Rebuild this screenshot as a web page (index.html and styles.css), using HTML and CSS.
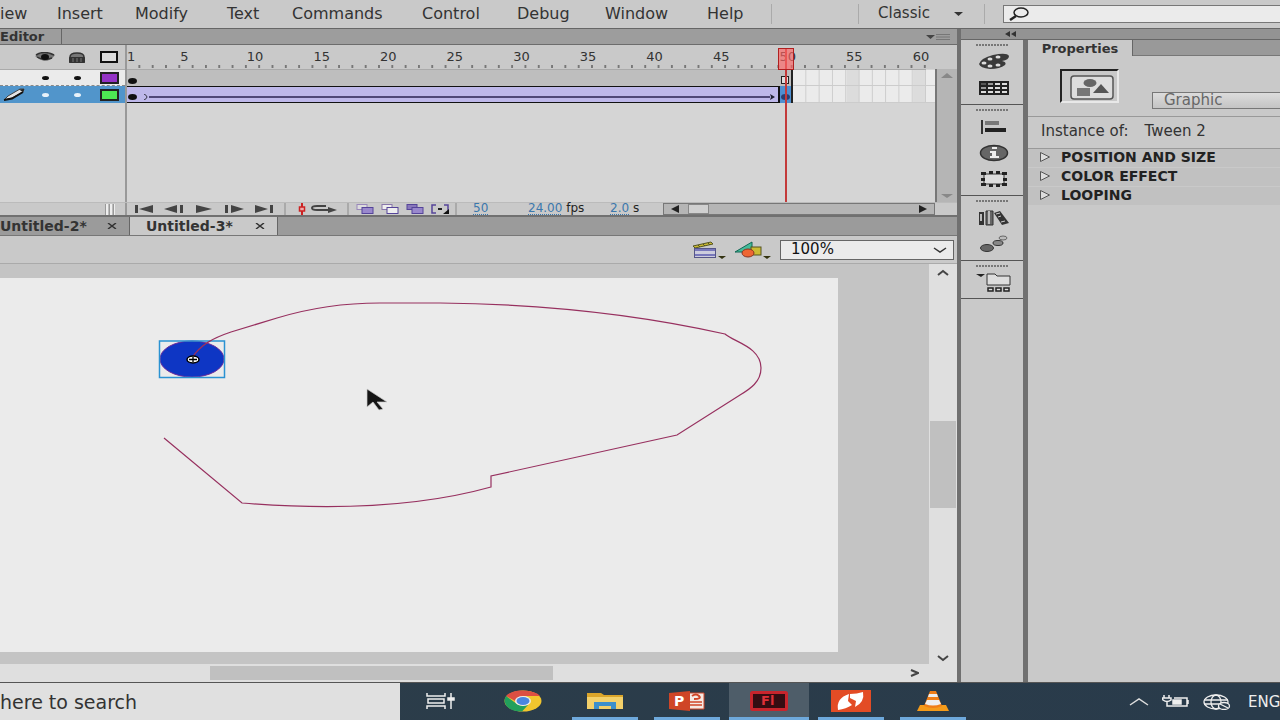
FILE: index.html
```html
<!DOCTYPE html>
<html lang="en">
<head>
<meta charset="utf-8">
<title>Untitled-3*</title>
<link rel="stylesheet" href="styles.css">
</head>
<body>
<header class="menubar">
  <nav class="menus">
    <button>iew</button><button>Insert</button><button>Modify</button><button>Text</button><button>Commands</button><button>Control</button><button>Debug</button><button>Window</button><button>Help</button>
  </nav>
  <div class="workspace">
    <select class="workspace-select" aria-label="Workspace"><option>Classic</option></select>
    <svg width="9" height="5" viewBox="0 0 9 5"><path d="M0 0h9L4.500 4z" fill="#333"/></svg>
  </div>
  <label class="help-search">
    <svg width="22" height="14" viewBox="0 0 22 14" fill="none" stroke="#222"><ellipse cx="13" cy="5.500" rx="7" ry="4.500" stroke-width="1.500"/><path d="M8 9L2 13" stroke-width="2.500"/></svg>
    <input type="text" aria-label="Search help">
  </label>
</header>

<main class="workarea">
  <section class="editor">
    <div class="panel-tabs">
      <button class="panel-tab">Editor</button>
      <button class="panel-menu" aria-label="Panel menu"><svg width="24" height="8" viewBox="0 0 24 8"><path d="M0 2h9L4.500 6z" fill="#444"/><path d="M10 1.500h14M10 4h14M10 6.500h14" stroke="#777"/></svg></button>
    </div>

    <div class="timeline">
      <div class="layers">
        <div class="layer layer-head">
          <span></span>
          <svg width="20" height="10" viewBox="0 0 20 10"><path d="M0 4Q9-2 20 3Q16 9 9 9Q4 8 0 4" fill="#777"/><path d="M1 3Q9-2 19 3M2 5Q8 9 17 6" fill="none" stroke="#333" stroke-width="1.500"/><ellipse cx="10" cy="5" rx="4" ry="3" fill="#111"/></svg>
          <svg width="16" height="11" viewBox="0 0 16 11"><path d="M1 5Q1 1 8 1T15 5V10H1z" fill="#777" stroke="#333" stroke-width="1.500"/><rect y="5" width="16" height="6" rx="1" fill="#333"/><path d="M3 7h10M3 9h10" stroke="#777" stroke-dasharray="2 2"/></svg>
          <svg width="18" height="12" viewBox="0 0 18 12"><rect x="1" y="1" width="16" height="10" fill="#ddd" stroke="#111" stroke-width="2"/></svg>
        </div>
        <div class="layer layer-guide">
          <span></span><i class="dot"></i><i class="dot"></i><i class="swatch purple"></i>
        </div>
        <div class="layer layer-active">
          <svg class="pencil" width="24" height="14" viewBox="0 0 24 14"><path d="M1 12L5 8L17 1H21L20 4L9 10z" fill="#e4e4e4" stroke="#444"/><path d="M1 12L9 10.500L20 4" fill="none" stroke="#111" stroke-width="2"/><path d="M16 1.500L21 1L20 4z" fill="#222"/></svg>
          <i class="dot"></i><i class="dot"></i><i class="swatch green"></i>
        </div>
      </div>
      <div class="frames">
        <div class="frame-area">
          <div class="ruler">
            <span class="first">1</span><span>5</span><span>10</span><span>15</span><span>20</span><span>25</span><span>30</span><span>35</span><span>40</span><span>45</span><span>50</span><span>55</span><span class="last">60</span>
          </div>
          <div class="track track-guide">
            <div class="span-static"><i class="key"></i><i class="span-end"></i></div><div class="empty"></div>
          </div>
          <div class="track">
            <div class="span-tween"><i class="key"></i>
              <svg class="tween-start" width="6" height="6" viewBox="0 0 6 6"><path d="M1 0Q7 3 1 6" fill="none" stroke="#334"/></svg>
              <i class="tween-line"></i>
              <svg class="tween-end" width="5" height="6" viewBox="0 0 5 6"><path d="M0 0L5 3L0 6L1 3z" fill="#223"/></svg>
            </div>
            <div class="frame-selected"><i class="key"></i></div><div class="empty"></div>
          </div>
          <div class="playhead"></div>
        </div>
      </div>
      <div class="tl-scroll">
        <svg width="12" height="6" viewBox="0 0 12 6"><path d="M0 5h12L6 0z" fill="#888"/></svg>
        <svg width="12" height="6" viewBox="0 0 12 6"><path d="M0 1h12L6 5z" fill="#888"/></svg>
      </div>
    </div>

    <div class="tl-footer">
      <div class="footer-left"><i class="grip"></i></div>
      <div class="transport">
        <button aria-label="First frame"><svg width="20" height="10" viewBox="0 0 20 10" fill="#444"><path d="M1 1h3v8H1zM19 1v8L5 5z"/></svg></button>
        <button aria-label="Step back"><svg width="20" height="10" viewBox="0 0 20 10" fill="#444"><path d="M13 1v8L0 5zM16 1h3v8h-3z"/></svg></button>
        <button aria-label="Play"><svg width="18" height="10" viewBox="0 0 18 10"><path d="M1 1v8L17 5z" fill="#444"/></svg></button>
        <button aria-label="Step forward"><svg width="20" height="10" viewBox="0 0 20 10" fill="#444"><path d="M1 1h3v8H1zM7 1v8L20 5z"/></svg></button>
        <button aria-label="Last frame"><svg width="20" height="10" viewBox="0 0 20 10" fill="#444"><path d="M1 1v8L14 5zM16 1h3v8h-3z"/></svg></button>
      </div>
      <i class="sep"></i>
      <div class="marks">
        <button aria-label="Center frame"><svg width="8" height="12" viewBox="0 0 8 12"><path d="M4 0v12" stroke="#c22" stroke-width="2"/><rect x="1.500" y="4" width="5" height="4" fill="#eaa" stroke="#c22" stroke-width="1.500"/></svg></button>
        <button aria-label="Loop"><svg width="28" height="10" viewBox="0 0 28 10"><path d="M16 2H7Q2 2 2 4T7 6H20" fill="none" stroke="#444" stroke-width="2"/><path d="M18 3L27 6L18 9z" fill="#444"/></svg></button>
      </div>
      <i class="sep"></i>
      <div class="onions">
        <button aria-label="Onion skin"><svg width="18" height="10" viewBox="0 0 18 10"><rect x="1" y=".5" width="10" height="5" fill="#ddd" stroke="#98b"/><rect x="6" y="3.500" width="11" height="6" fill="#98c" stroke="#549"/></svg></button>
        <button aria-label="Onion skin outlines"><svg width="18" height="10" viewBox="0 0 18 10"><rect x="1" y=".5" width="10" height="5" fill="#eee" stroke="#87a"/><rect x="6" y="3.500" width="11" height="6" fill="#eee" stroke="#549"/></svg></button>
        <button aria-label="Edit multiple frames"><svg width="18" height="10" viewBox="0 0 18 10"><rect x="1" y=".5" width="10" height="5" fill="#87b" stroke="#549"/><rect x="6" y="3.500" width="11" height="6" fill="#98c" stroke="#549"/></svg></button>
        <button aria-label="Onion markers"><svg width="18" height="10" viewBox="0 0 18 10"><path d="M5 1H1v8h4M13 1h4v7" fill="none" stroke="#549" stroke-width="1.500"/><path d="M7 5h4" stroke="#222" stroke-width="2"/><path d="M18 5v5h-6z" fill="#111"/></svg></button>
      </div>
      <i class="sep"></i>
      <div class="readout"><a href="#">50</a><span><a href="#">24.00</a> fps</span><span><a href="#">2.0</a> s</span></div>
      <div class="tl-hscroll">
        <button aria-label="Scroll left"><svg width="8" height="8" viewBox="0 0 8 8"><path d="M8 0v8L0 4z" fill="#222"/></svg></button>
        <i class="tl-thumb"></i>
        <button class="to-right" aria-label="Scroll right"><svg width="8" height="8" viewBox="0 0 8 8"><path d="M0 0v8L8 4z" fill="#222"/></svg></button>
      </div>
    </div>

    <div class="doc-tabs">
      <button class="doc-tab doc-prev"><span>Untitled-2*</span><svg width="10" height="6" viewBox="0 0 10 6"><path d="M1 0L9 6M9 0L1 6" stroke="#333" stroke-width="1.500"/></svg></button>
      <button class="doc-tab doc-current"><span>Untitled-3*</span><svg width="10" height="6" viewBox="0 0 10 6"><path d="M1 0L9 6M9 0L1 6" stroke="#333" stroke-width="1.500"/></svg></button>
    </div>

    <div class="editbar">
      <button aria-label="Edit scene"><svg width="34" height="18" viewBox="0 0 34 18"><path d="M1 5L19 1L21 3L3 7z" fill="#cb3" stroke="#552"/><path d="M6 4l2 2M11 3l2 2M16 2l2 2" stroke="#552"/><rect x="2.500" y="7.500" width="21" height="9" fill="#ccd" stroke="#558"/><path d="M3 9h20M3 14h20" stroke="#77b" stroke-width="2"/><path d="M26 15h8l-4 3z" fill="#331"/></svg></button>
      <button aria-label="Edit symbols"><svg width="38" height="18" viewBox="0 0 38 18"><path d="M1 11L18 1V11z" fill="#4b9" stroke="#165"/><rect x="17" y="6" width="10" height="8" fill="#cb3" stroke="#552"/><ellipse cx="14" cy="12" rx="6" ry="4" fill="#e63" stroke="#832"/><path d="M29 15h8l-4 3z" fill="#331"/></svg></button>
      <div class="zoom-box">
        <select aria-label="Zoom"><option>100%</option></select>
        <svg width="14" height="6" viewBox="0 0 14 6"><path d="M1 1L7 5L13 1" fill="none" stroke="#333" stroke-width="1.500"/></svg>
      </div>
    </div>

    <div class="stage">
      <div class="pasteboard">
        <svg class="paper" viewBox="0 278 838 374" preserveAspectRatio="xMinYMin meet">
          <ellipse cx="192" cy="359" rx="32" ry="18" fill="#0e36c4" stroke="#6c2a9a"/>
          <rect x="159.500" y="341" width="65" height="36.500" fill="none" stroke="#2a92d2" stroke-width="1.500"/>
          <path d="M192 358C200 345 213 338 231 332L277 318C310 308 340 303 380 303L440 303C540 304 640 315 725 334C734 342 761 347 761 368C761 382 750 389 740 395L677 435L491 476V487Q391 515 242 503L164 438" fill="none" stroke="#97305f" stroke-width="1.200"/>
          <ellipse cx="193" cy="359.500" rx="6" ry="3.500" fill="#fff" stroke="#000" stroke-width="1.500"/>
          <path d="M189 359.500h8M193 357v5" stroke="#000" stroke-width="1.300"/>
          <path d="M367 389V407L373 402L379 410L383 409L377 402H387z" fill="#151515" stroke="#ccc" stroke-width=".7"/>
        </svg>
      </div>
      <div class="vscroll">
        <svg width="12" height="7" viewBox="0 0 12 7"><path d="M1 6L6 2L11 6" fill="none" stroke="#444" stroke-width="2"/></svg>
        <i class="vthumb"></i>
        <svg width="12" height="7" viewBox="0 0 12 7"><path d="M1 1L6 5L11 1" fill="none" stroke="#444" stroke-width="2"/></svg>
      </div>
      <div class="hscroll">
        <i class="hthumb"></i>
        <svg width="9" height="8" viewBox="0 0 9 8"><path d="M1 1L8 4L1 7" fill="none" stroke="#444" stroke-width="2"/></svg>
      </div>
    </div>
  </section>

  <aside class="side">
    <div class="side-bar"><svg width="12" height="6" viewBox="0 0 12 6"><path d="M5 0v6L0 3zM11 0v6L6 3z" fill="#333"/></svg></div>
    <div class="side-body">
      <div class="dock">
        <div class="dock-group g-two">
          <button aria-label="Color"><svg width="32" height="18" viewBox="0 0 32 18"><path d="M1 11Q3 5 15 2Q29 -1 31 3Q31 7 24 8Q29 9 27 12Q22 16 12 16Q2 15 1 11" fill="#3a3a3a"/><g fill="#ddd"><ellipse cx="6" cy="10" rx="2.500" ry="1.500"/><ellipse cx="12" cy="6" rx="2.500" ry="1.500"/><ellipse cx="20" cy="4" rx="2.500" ry="1.500"/><ellipse cx="12" cy="13" rx="2.500" ry="1.500"/><ellipse cx="20" cy="12" rx="2.500" ry="1.500"/></g></svg></button>
          <button aria-label="Swatches"><svg width="30" height="14" viewBox="0 0 30 14"><rect width="30" height="14" fill="#222"/><path d="M2 2h5v2H2z" fill="#555"/><path d="M9 2h5v2H9zM2 6h5v2H2z" fill="#999"/><path d="M16 2h5v2h-5zM23 2h5v2h-5zM9 6h5v2H9zM16 6h5v2h-5zM23 6h5v2h-5zM2 10h5v2H2zM9 10h5v2H9zM16 10h5v2h-5zM23 10h5v2h-5z" fill="#ddd"/></svg></button>
        </div>
        <div class="dock-group g-three">
          <button aria-label="Align"><svg width="26" height="14" viewBox="0 0 26 14"><path d="M0 0h2v14H0z" fill="#333"/><path d="M4 1h14v4H4z" fill="#777"/><path d="M4 8h21v4H4z" fill="#222"/></svg></button>
          <button aria-label="Info"><svg width="30" height="18" viewBox="0 0 30 18"><ellipse cx="15" cy="9" rx="13.500" ry="7.500" fill="#666" stroke="#333" stroke-width="1.500"/><path d="M13 3h5v2h-5zM11 7h6v5h3v2h-9v-2h2V9h-2z" fill="#eee"/></svg></button>
          <button aria-label="Transform"><svg width="28" height="16" viewBox="0 0 28 16"><rect x="4" y="3" width="20" height="10" fill="#ddd" stroke="#333"/><path d="M1 1h5v3H1zM9 0h4v3H9zM16 0h4v3h-4zM22 1h5v3h-5zM1 7h4v3H1zM23 7h4v3h-4zM1 12h5v3H1zM9 13h4v3H9zM16 13h4v3h-4zM22 12h5v3h-5z" fill="#222"/></svg></button>
        </div>
        <div class="dock-group g-two-small">
          <button aria-label="Library"><svg width="32" height="16" viewBox="0 0 32 16"><path d="M1 2h5v13H1z" fill="#333"/><path d="M8 1h7v14H8z" fill="#666" stroke="#333"/><path d="M2 4h2v7H2zM10 1h2v13h-2z" fill="#bbb"/><path d="M16 3L22 1L31 13L24 15z" fill="#333"/><path d="M18 4l4-1M20 7l3-1M23 12l4-1" stroke="#ccc"/></svg></button>
          <button aria-label="Motion presets"><svg width="30" height="18" viewBox="0 0 30 18" stroke="#333"><ellipse cx="8" cy="13" rx="6.500" ry="3.500" fill="#666"/><ellipse cx="19" cy="8" rx="5" ry="2.500" fill="#888"/><ellipse cx="24" cy="3" rx="4" ry="2" fill="#bbb" stroke="#666"/></svg></button>
        </div>
        <div class="dock-group g-one">
          <button aria-label="Project"><svg width="36" height="20" viewBox="0 0 36 20"><path d="M0 1h9L5 4z" fill="#222"/><path d="M11 12V1h8l2 2h13v9z" fill="#ddd" stroke="#333"/><path d="M12 15h5v3h-5zM20 15h5v3h-5zM28 15h5v3h-5z" fill="#ddd" stroke="#222" stroke-width="1.500"/></svg></button>
        </div>
      </div>
      <section class="props">
        <div class="props-tabs"><button>Properties</button></div>
        <div class="props-head">
          <div class="symbol-icon"><svg width="46" height="28" viewBox="0 0 46 28"><rect x="2" y="2" width="42" height="23" rx="3" fill="#ddd" stroke="#555" stroke-width="1.500"/><ellipse cx="21" cy="9" rx="6.500" ry="4" fill="#666"/><path d="M8 14h13v8H8z" fill="#777"/><path d="M32 10l8 9H24z" fill="#555"/></svg></div>
          <select aria-label="Instance behavior"><option>Graphic</option></select>
        </div>
        <div class="instance"><span>Instance of:</span><span>Tween 2</span></div>
        <div class="accordion">
          <button><svg width="10" height="10" viewBox="0 0 10 10"><path d="M.5 .5v9L9.500 5z" fill="#ddd" stroke="#555"/></svg>POSITION AND SIZE</button>
          <button><svg width="10" height="10" viewBox="0 0 10 10"><path d="M.5 .5v9L9.500 5z" fill="#ddd" stroke="#555"/></svg>COLOR EFFECT</button>
          <button><svg width="10" height="10" viewBox="0 0 10 10"><path d="M.5 .5v9L9.500 5z" fill="#ddd" stroke="#555"/></svg>LOOPING</button>
        </div>
      </section>
    </div>
  </aside>
</main>

<footer class="taskbar">
  <input class="task-search" type="text" placeholder="here to search" aria-label="Search">
  <div class="apps">
    <button aria-label="Task view"><svg width="30" height="16" viewBox="0 0 30 16" fill="none" stroke="#eee" stroke-width="1.500"><path d="M1 0v3h18V0M1 16v-3h18v3M2 6h16v4H2zM25 0v16"/><path d="M22 5h6v2h-6z" fill="#eee"/></svg></button>
    <button aria-label="Chrome"><svg width="38" height="22" viewBox="0 0 38 22"><ellipse cx="19" cy="11" rx="18.500" ry="10.500" fill="#f2c62e"/><path d="M2 6Q8 0 19 .5Q32 1 36 6H19L13 12z" fill="#dc4f43"/><path d="M2 6L13 14Q17 17 24 15L18 21.500Q2 21 .5 11Q.5 8 2 6" fill="#22a05c"/><ellipse cx="19" cy="11" rx="8" ry="5" fill="#eee"/><ellipse cx="19" cy="11" rx="6.500" ry="4" fill="#4a86e0"/></svg></button>
    <button class="running" aria-label="File Explorer"><svg width="36" height="18" viewBox="0 0 36 18"><path d="M0 1h14l3 2h19v14H0z" fill="#dba52a"/><path d="M0 5h36v12H0z" fill="#f3d06a"/><path d="M7 17V10h22v7h-5v-3H12v3z" fill="#3c8fcb"/></svg></button>
    <button class="running" aria-label="PowerPoint"><svg width="38" height="20" viewBox="0 0 38 20"><path d="M20 2h16v16H20z" fill="#f4e9e4" stroke="#cf4527"/><path d="M22 11h12M22 14h12" stroke="#cf4527" stroke-width="1.500"/><path d="M24 5Q28 2 31 5T26 8" fill="none" stroke="#cf4527" stroke-width="2"/><path d="M1 2L22 0V20L1 18z" fill="#cf4527"/><text x="6" y="15" font-family="DejaVu Sans" font-size="14" font-weight="bold" fill="#fff">P</text></svg></button>
    <button class="running active" aria-label="Flash"><svg width="38" height="20" viewBox="0 0 38 20"><rect x="1.500" y="1.500" width="35" height="17" rx="1" fill="#350d12" stroke="#c8252d" stroke-width="3"/><text x="11" y="14" font-family="DejaVu Sans" font-size="13" font-weight="bold" fill="#dd3038">Fl</text></svg></button>
    <button class="running" aria-label="Nitro"><svg width="40" height="22" viewBox="0 0 40 22"><path d="M0 0h40v22H0z" fill="#e34c25"/><path d="M7 20Q5 8 18 4L17 11L21 15Q15 19 7 20M19 4Q26 4 32 2Q34 12 24 17L25 11L19 8z" fill="#fff"/></svg></button>
    <button class="running" aria-label="VLC"><svg width="34" height="22" viewBox="0 0 34 22"><path d="M4 15h26l3 6H1z" fill="#f59b1a"/><path d="M14 1h6l6 15Q17 20 8 16z" fill="#f07e17"/><path d="M13 4h8l1 3H12zM11 10h12l2 4Q17 17 9 14z" fill="#eee"/></svg></button>
  </div>
  <div class="tray">
    <button aria-label="Hidden icons"><svg width="20" height="8" viewBox="0 0 20 8"><path d="M1 7L10 1L19 7" fill="none" stroke="#ddd" stroke-width="1.500"/></svg></button>
    <button aria-label="Battery"><svg width="28" height="13" viewBox="0 0 28 13" fill="none" stroke="#eee" stroke-width="1.500"><path d="M2 0v3M7 0v3M0 3h9v2Q5 8 1 5zM5 7v4h20V3H12M26 5v4"/><path d="M11 5h8v4h-8z" fill="#eee"/></svg></button>
    <button aria-label="Network"><svg width="28" height="16" viewBox="0 0 28 16" fill="none" stroke="#eee" stroke-width="1.300"><ellipse cx="13" cy="8" rx="12" ry="7"/><ellipse cx="13" cy="8" rx="5" ry="7"/><path d="M1 6h24M1 10h24"/><ellipse cx="21" cy="12" rx="5.500" ry="3.500" fill="#293b4b"/><path d="M17 10l8 4"/></svg></button>
    <button class="lang">ENG</button>
  </div>
</footer>
</body>
</html>
```
FILE: styles.css
```css
* { box-sizing: border-box; }
body {
  margin: 0;
  height: 100vh;
  display: flex;
  flex-direction: column;
  overflow: hidden;
  background: #c9c9c9;
  color: #333;
  font-family: "DejaVu Sans", "Noto Sans", sans-serif;
  font-size: 13px;
}
button, input, select {
  font: inherit;
  color: inherit;
  background: none;
  border: 0;
  border-radius: 0;
  padding: 0;
  margin: 0;
  appearance: none;
}
button { display: flex; align-items: center; justify-content: center; white-space: nowrap; }
svg { display: block; flex: none; }
i { display: block; flex: none; }

/* Menu bar */
.menubar { flex: none; height: 29px; display: flex; align-items: center; border-bottom: 1px solid #666; font-size: 16px; }
.menus { display: grid; grid-template-columns: 57px 78px 92px 65px 130px 95px 88px 102px 64px; padding-bottom: 2px; }
.menus button { justify-content: flex-start; }
.workspace { display: flex; align-items: center; height: 20px; width: 214px; margin-right: 18px; padding-left: 106px; border-left: 1px solid #aaa; border-right: 1px solid #aaa; background: linear-gradient(#aaa, #aaa) 86px 0 / 1px 100% no-repeat; }
.workspace-select { width: 76px; font-size: 15px; padding-bottom: 2px; }
.help-search { flex: 1; height: 18px; display: flex; align-items: center; padding-left: 4px; background: #ebebeb; border: 1px solid #777; border-right: 0; }
.help-search input { flex: 1; min-width: 0; }

/* Work area */
.workarea { flex: 1; min-height: 0; display: flex; }
.editor { flex: 1; min-width: 0; display: flex; flex-direction: column; }
.panel-tabs { flex: none; height: 16px; display: flex; justify-content: space-between; background: #9d9d9d; border-bottom: 1px solid #6c6c6c; }
.panel-tab { width: 62px; justify-content: flex-start; border-right: 1px solid #666; font-weight: bold; }
.panel-menu { padding-right: 7px; }

/* Timeline */
.timeline { flex: none; height: 157px; display: flex; background: linear-gradient(#c9c9c9, #c9c9c9) 0 0 / 100% 24px no-repeat, #d5d5d5; }
.layers { flex: none; width: 127px; border-right: 2px solid #999; }
.layer { display: grid; grid-template-columns: 1fr 32px 32px 32px; align-items: center; justify-items: center; height: 17px; }
.layer-head { height: 25px; background: #c9c9c9; border-bottom: 1px solid #aaa; }
.layer-guide { height: 16px; background: #ebebeb; border-bottom: 1px dashed #888; }
.layer-active { background: #5195cb; }
.dot { width: 7px; height: 4px; border-radius: 50%; background: #111; }
.layer-active .dot { background: #e8f2fa; }
.swatch { width: 19px; height: 12px; border: 2px solid #222; }
.purple { background: #9433c5; }
.green { background: #4de853; }
.frames { flex: 1; min-width: 0; }
.frame-area { position: relative; height: 100%; margin-right: 9px; }
.ruler {
  display: flex;
  height: 25px;
  padding-top: 4px;
  line-height: 16px;
  border-bottom: 1px solid #aaa;
  background: linear-gradient(to left, #777 2px, transparent 2px) 0 20px / calc(100% / 60) 3px repeat-x;
}
.ruler span { flex: 5 0 0; width: 0; }
.ruler .first { flex-grow: 4; }
.ruler .last { flex-grow: 1; }
.track { display: flex; height: 17px; margin-right: -9px; --frame: calc((100% - 9px) / 60); }
.track-guide { height: 16px; }
.span-static { flex: none; width: calc(var(--frame) * 50); display: flex; justify-content: space-between; align-items: flex-end; padding: 2px 2px 2px 1px; background: #bebebe; border-right: 2px solid #222; }
.span-end { width: 8px; height: 8px; border: 1px solid #222; background: #ddd; }
.key { width: 9px; height: 6px; border-radius: 50%; background: #111; }
.span-tween { flex: none; width: calc(var(--frame) * 49); display: flex; align-items: flex-end; padding: 0 3px 2px 1px; background: #beb8ea; border: solid #111; border-width: 1px 2px 1px 0; }
.tween-start { margin-left: 6px; }
.tween-line { flex: 1; height: 4px; border-top: 2px solid #504878; }
.frame-selected { flex: none; width: var(--frame); display: flex; align-items: flex-end; justify-content: center; padding-bottom: 3px; background: #4f8fd0; border-right: 2px solid #222; }
.frame-selected .key { background: #2a3f72; }
.empty {
  flex: 1;
  border-bottom: 1px solid #ccc;
  background:
    linear-gradient(to left, #ccc 1px, transparent 1px) 0 0 / calc((100% - 9px) / 10) 100%,
    linear-gradient(to right, transparent 80%, #dcdcdc 80%) 0 0 / calc((100% - 9px) / 2) 100%,
    #ebebeb;
}
.playhead { position: absolute; top: 3px; bottom: 0; left: calc(100% * 49 / 60 - 2px); width: 16px; background: linear-gradient(#c33a3a, #c33a3a) 50% 0 / 2px 100% no-repeat; }
.playhead::before { content: ""; display: block; height: 20px; border: 1px solid #b02020; background: rgba(255, 100, 100, .65); }
.tl-scroll { flex: none; width: 22px; display: flex; flex-direction: column; justify-content: space-between; align-items: center; margin-top: 24px; padding: 4px 0 3px; background: #b5b5b5; border-left: 2px solid #777; }

.tl-footer { flex: none; height: 15px; display: flex; align-items: stretch; border-bottom: 2px solid #707070; border-top: 1px solid #bbb; }
.footer-left { width: 127px; padding: 1px 10px 0; display: flex; justify-content: flex-end; border-right: 2px solid #999; }
.grip { width: 10px; background: repeating-linear-gradient(to right, #999 0 1px, #eee 1px 3px, #bbb 3px 4px); }
.transport { display: flex; padding: 0 5px 0 2px; }
.transport button { width: 30px; }
.sep { width: 2px; background: #aaa; }
.marks { display: flex; width: 61px; gap: 4px; padding-left: 12px; }
.onions { display: grid; grid-template-columns: repeat(4, 25px); width: 106px; padding-left: 3px; }
.readout { display: grid; grid-template-columns: 55px 82px 1fr; align-items: start; flex: 1; padding-left: 16px; font-size: 12px; line-height: 10px; white-space: nowrap; color: #222; }
.readout a { color: #3b78ad; text-decoration: underline dotted 1px; text-underline-offset: 2px; }
.tl-hscroll { flex: none; width: 272px; margin-right: 22px; display: flex; background: #b5b5b5; border: 1px solid #777; }
.tl-hscroll button { width: 22px; }
.tl-thumb { width: 21px; background: #d0d0d0; border: 1px solid #888; margin-left: 2px; }
.tl-hscroll .to-right { margin-left: auto; }

/* Document tabs and edit bar */
.doc-tabs { flex: none; height: 19px; display: flex; background: #9b9b9b; border-bottom: 1px solid #777; font-size: 14px; font-weight: bold; }
.doc-tab { justify-content: space-between; padding-right: 12px; border-right: 1px solid #666; }
.doc-prev { width: 130px; }
.doc-current { width: 148px; padding-left: 16px; background: #c9c9c9; }
.editbar { flex: none; height: 28px; display: flex; align-items: center; justify-content: flex-end; gap: 8px; padding-right: 3px; border-bottom: 1px solid #aaa; }
.zoom-box { flex: none; width: 174px; height: 20px; display: flex; align-items: center; padding: 0 6px 0 10px; background: #ebebeb; border: 1px solid #666; }
.zoom-box select { flex: 1; padding-bottom: 2px; font-size: 15px; color: #111; }

/* Stage */
.stage { flex: 1; min-height: 0; display: grid; grid-template: 1fr 18px / 1fr 28px; }
.pasteboard { background: #c4c4c4; padding: 14px 91px 12px 0; overflow: hidden; }
.paper { width: 100%; height: 100%; background: #ebebeb; }
.vscroll { grid-row: span 2; display: flex; flex-direction: column; align-items: center; padding: 5px 1px 20px; background: #dfdfdf; }
.vthumb { width: 100%; height: 87px; margin: 145px 0 auto; background: #c0c0c0; }
.hscroll { display: flex; align-items: center; justify-content: space-between; padding: 2px 10px 2px 210px; background: #dfdfdf; }
.hthumb { width: 343px; height: 100%; background: #c0c0c0; }

/* Side panels */
.side { flex: none; width: 323px; display: flex; flex-direction: column; border-left: 4px solid #707070; }
.side-bar { flex: none; height: 11px; padding: 2px 0 0 44px; background: #939393; border-bottom: 1px solid #666; }
.side-body { flex: 1; display: flex; }
.dock { flex: none; width: 67px; border-right: 5px solid #707070; }
.dock-group { display: grid; align-content: start; justify-items: center; border-bottom: 1px solid #555; padding-top: 9px; background: repeating-linear-gradient(to right, #777 0 2px, transparent 2px 3px) 15px 4px / 33px 2px no-repeat; }
.dock-group button { height: 26px; padding-left: 3px; }
.g-two { height: 65px; }
.g-three { height: 91px; }
.g-two-small { height: 65px; }
.g-one { height: 38px; }
.props { flex: 1; min-width: 0; }
.props-tabs { height: 16px; display: flex; background: #999; box-shadow: inset 0 -1px #777; }
.props-tabs button { width: 105px; background: #c9c9c9; border-right: 1px solid #666; font-weight: bold; }
.props-head { height: 61px; display: flex; align-items: flex-start; padding: 13px 0 0 32px; border-bottom: 1px solid #999; }
.symbol-icon { width: 59px; height: 34px; padding: 3px 0 0 7px; border: 2px solid #222; border-right-color: #e8e8e8; border-bottom-color: #e8e8e8; }
.props-head select { flex: 1; min-width: 0; height: 17px; margin: 23px 0 0 33px; padding: 0 11px; border: 1px solid #777; border-right: 0; background: linear-gradient(#dcdcdc, #c4c4c4); font-size: 15px; line-height: 15px; color: #666; }
.instance { height: 32px; display: flex; align-items: center; gap: 16px; padding: 0 0 4px 13px; border-bottom: 1px solid #999; font-size: 15px; }
.accordion { display: grid; gap: 1px; }
.accordion button { height: 18px; justify-content: flex-start; gap: 11px; padding: 0 0 2px 12px; background: #c1c1c1; font-size: 14px; font-weight: bold; color: #222; }

/* Taskbar */
.taskbar { flex: none; height: 38px; display: flex; background: linear-gradient(to right, #2c3d49, #293b4b); border-top: 1px solid #555; }
.task-search { width: 400px; background: #e0e0e0; font-size: 19px; padding: 0; }
.task-search::placeholder { color: #333; opacity: 1; }
.apps { display: flex; }
.apps button { width: 82px; border-bottom: 3px solid transparent; padding: 2px 0 0; }
.apps .running { background: linear-gradient(#6ea9dc, #6ea9dc) 50% 100% / 66px 3px no-repeat border-box; }
.apps .active { background: linear-gradient(#6ea9dc, #6ea9dc) 50% 100% / 80px 3px no-repeat border-box, linear-gradient(#4e5d69, #4e5d69) 50% 0 / 80px 100% no-repeat border-box; }
.tray { display: flex; margin-left: auto; gap: 13px; color: #eee; }
.lang { width: 32px; margin-left: 4px; justify-content: flex-start; font-size: 15px; overflow: hidden; }
```
